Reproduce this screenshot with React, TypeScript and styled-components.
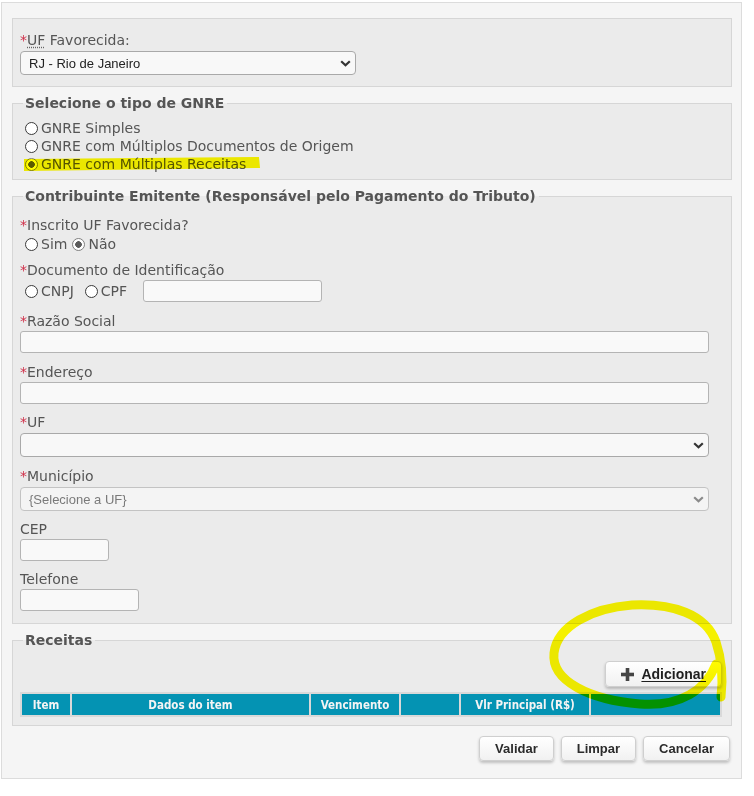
import React from 'react';
import styled, { createGlobalStyle } from 'styled-components';

const GlobalStyle = createGlobalStyle`
  html, body { margin: 0; padding: 0; background: #fff; }
  body { font-family: "DejaVu Sans", Verdana, sans-serif; }
`;

const Root = styled.div`
  position: relative;
  padding: 2px 0 0 1px;
`;

const Page = styled.div`
  box-sizing: border-box;
  width: 741px;
  padding: 15px 9px 17px 10px;
  background: #f5f5f5;
  border: 1px solid #dcdcdc;
`;

const Fieldset = styled.fieldset<{ $pad: string; $mb?: number }>`
  margin: 0 0 ${p => p.$mb ?? 7}px;
  padding: ${p => p.$pad};
  border: 1px solid #d6d6d6;
  background: #ebebeb;
  min-width: 0;
`;

const Legend = styled.legend`
  margin-left: 3px;
  padding: 0 3px 0 2px;
  font-weight: bold;
  font-size: 14px;
  line-height: 18px;
  color: #555;
`;

const Label = styled.div<{ $mt?: number }>`
  margin-top: ${p => p.$mt ?? 0}px;
  font-size: 14px;
  line-height: 18px;
  color: #555;
`;

const Req = styled.span`
  color: #d0304a;
`;

const Abbr = styled.abbr`
  text-decoration: underline dotted #666;
  text-underline-offset: 2px;
`;

const RadioRow = styled.div<{ $h?: number; $mt?: number }>`
  display: flex;
  align-items: center;
  height: ${p => p.$h ?? 18}px;
  margin-top: ${p => p.$mt ?? 0}px;
  font-size: 14px;
  color: #555;
`;

const RadioLabel = styled.label<{ $mr?: number }>`
  display: inline-flex;
  align-items: center;
  margin-right: ${p => p.$mr ?? 0}px;
  white-space: nowrap;
`;

const Radio = styled.input.attrs({ type: 'radio' })`
  appearance: none;
  -webkit-appearance: none;
  box-sizing: border-box;
  width: 13px;
  height: 13px;
  margin: 0 3px 0 5px;
  border-radius: 50%;
  border: 1px solid #3a3a3a;
  background: #fff;
  &:checked {
    border-color: #808080;
    background: radial-gradient(circle, #5c5c5c 0 3px, #fff 3.6px);
  }
`;

const TextInput = styled.input<{ $w?: number; $ml?: number; $mt?: number }>`
  box-sizing: border-box;
  display: block;
  width: ${p => (p.$w ? `${p.$w}px` : '100%')};
  height: 22px;
  margin: ${p => p.$mt ?? 0}px 0 0 ${p => p.$ml ?? 0}px;
  border: 1px solid #b4b4b4;
  border-radius: 3px;
  background: #f9f9f9;
  font: 13px "Liberation Sans", Arial, sans-serif;
`;

const SelectWrap = styled.div<{ $w?: number }>`
  position: relative;
  width: ${p => (p.$w ? `${p.$w}px` : '100%')};
  margin-top: 2px;
`;

const SelectBox = styled.select`
  appearance: none;
  -webkit-appearance: none;
  box-sizing: border-box;
  display: block;
  width: 100%;
  height: 24px;
  border: 1px solid #a9a9a9;
  border-radius: 4px;
  background: #f8f8f8;
  padding: 0 24px 0 8px;
  font: 13px "Liberation Sans", Arial, sans-serif;
  color: #222;
  &:disabled {
    color: #7a7a7a;
    border-color: #c3c3c3;
    background: #f4f4f4;
    opacity: 1;
  }
`;

const Chevron = styled.svg`
  position: absolute;
  right: 5px;
  top: 50%;
  margin-top: -3px;
  pointer-events: none;
`;

const ActionRow = styled.div<{ $mt?: number; $pr?: number; $gap?: number }>`
  display: flex;
  justify-content: flex-end;
  gap: ${p => p.$gap ?? 0}px;
  margin-top: ${p => p.$mt ?? 0}px;
  padding-right: ${p => p.$pr ?? 0}px;
`;

const Button = styled.button<{ $h: number; $fs: number }>`
  box-sizing: border-box;
  display: inline-flex;
  align-items: center;
  justify-content: center;
  gap: 7px;
  height: ${p => p.$h}px;
  padding: 0 15px;
  border: 1px solid #cfcfcf;
  border-radius: 4px;
  background: linear-gradient(#ffffff, #f1f1f1);
  box-shadow: 0 2px 3px rgba(0, 0, 0, 0.22);
  font: bold ${p => p.$fs}px "Liberation Sans", Arial, sans-serif;
  color: #2b2b2b;
`;

const Underlined = styled.span`
  text-decoration: underline;
  text-underline-offset: 2px;
  color: #1f1f1f;
`;

const Table = styled.table`
  width: 702px;
  margin-top: 5px;
  table-layout: fixed;
  border-collapse: separate;
  border-spacing: 2px;
  background: #d9d9d9;
`;

const Th = styled.th<{ $w: number }>`
  width: ${p => p.$w}px;
  height: 21px;
  padding: 0;
  background: #0493b3;
  color: #f4f4f4;
  font: bold 11.5px "DejaVu Sans Condensed", "DejaVu Sans", sans-serif;
  font-stretch: condensed;
  text-align: center;
`;

const Overlay = styled.svg`
  position: absolute;
  left: 0;
  top: 0;
  pointer-events: none;
  mix-blend-mode: multiply;
`;

const Chev: React.FC<{ muted?: boolean }> = ({ muted }) => (
  <Chevron width="11" height="7" viewBox="0 0 11 7">
    <polyline
      points="1.2,1.2 5.5,5.3 9.8,1.2"
      fill="none"
      stroke={muted ? '#8a8a8a' : '#333'}
      strokeWidth="2.2"
    />
  </Chevron>
);

const Plus = () => (
  <svg width="13" height="13" viewBox="0 0 13 13">
    <rect x="4.7" y="0" width="3.6" height="13" fill="#454545" />
    <rect x="0" y="4.7" width="13" height="3.6" fill="#454545" />
  </svg>
);

const columns = [
  { label: 'Item', w: 48 },
  { label: 'Dados do item', w: 237 },
  { label: 'Vencimento', w: 88 },
  { label: '', w: 58 },
  { label: 'Vlr Principal (R$)', w: 128 },
  { label: '', w: 129 },
];

export default function App() {
  return (
    <Root>
      <GlobalStyle />
      <Page>
        <Fieldset $pad="12px 22px 11px 7px">
          <Label>
            <Req>*</Req>
            <Abbr title="Unidade Federativa">UF</Abbr> Favorecida:
          </Label>
          <SelectWrap $w={336}>
            <SelectBox defaultValue="RJ">
              <option value="RJ">RJ - Rio de Janeiro</option>
            </SelectBox>
            <Chev />
          </SelectWrap>
        </Fieldset>

        <Fieldset $pad="7px 22px 6px 7px">
          <Legend>Selecione o tipo de GNRE</Legend>
          <RadioRow>
            <RadioLabel>
              <Radio name="tipo" />GNRE Simples
            </RadioLabel>
          </RadioRow>
          <RadioRow>
            <RadioLabel>
              <Radio name="tipo" />GNRE com Múltiplos Documentos de Origem
            </RadioLabel>
          </RadioRow>
          <RadioRow>
            <RadioLabel>
              <Radio name="tipo" defaultChecked />GNRE com Múltiplas Receitas
            </RadioLabel>
          </RadioRow>
        </Fieldset>

        <Fieldset $pad="11px 22px 12px 7px">
          <Legend>Contribuinte Emitente (Responsável pelo Pagamento do Tributo)</Legend>
          <Label>
            <Req>*</Req>Inscrito UF Favorecida?
          </Label>
          <RadioRow $mt={1}>
            <RadioLabel>
              <Radio name="inscrito" />Sim
            </RadioLabel>
            <RadioLabel>
              <Radio name="inscrito" defaultChecked />Não
            </RadioLabel>
          </RadioRow>
          <Label $mt={8}>
            <Req>*</Req>Documento de Identificação
          </Label>
          <RadioRow $h={22} $mt={1}>
            <RadioLabel $mr={6}>
              <Radio name="doc" />CNPJ
            </RadioLabel>
            <RadioLabel>
              <Radio name="doc" />CPF
            </RadioLabel>
            <TextInput $w={179} $ml={16} />
          </RadioRow>
          <Label $mt={10}>
            <Req>*</Req>Razão Social
          </Label>
          <TextInput $mt={1} />
          <Label $mt={10}>
            <Req>*</Req>Endereço
          </Label>
          <TextInput $mt={1} />
          <Label $mt={9}>
            <Req>*</Req>UF
          </Label>
          <SelectWrap>
            <SelectBox defaultValue="">
              <option value=""></option>
            </SelectBox>
            <Chev />
          </SelectWrap>
          <Label $mt={10}>
            <Req>*</Req>Município
          </Label>
          <SelectWrap>
            <SelectBox disabled defaultValue="">
              <option value="">{'{Selecione a UF}'}</option>
            </SelectBox>
            <Chev muted />
          </SelectWrap>
          <Label $mt={9}>CEP</Label>
          <TextInput $w={89} $mt={1} />
          <Label $mt={9}>Telefone</Label>
          <TextInput $w={119} $mt={1} />
        </Fieldset>

        <Fieldset $pad="12px 9px 8px 7px" $mb={0}>
          <Legend>Receitas</Legend>
          <ActionRow>
            <Button $h={26} $fs={14}>
              <Plus />
              <Underlined>Adicionar</Underlined>
            </Button>
          </ActionRow>
          <Table>
            <thead>
              <tr>
                {columns.map((c, i) => (
                  <Th key={i} $w={c.w}>
                    {c.label}
                  </Th>
                ))}
              </tr>
            </thead>
          </Table>
        </Fieldset>

        <ActionRow $mt={10} $pr={2} $gap={7}>
          <Button $h={25} $fs={13}>Validar</Button>
          <Button $h={25} $fs={13}>Limpar</Button>
          <Button $h={25} $fs={13}>Cancelar</Button>
        </ActionRow>
      </Page>

      <Overlay width="754" height="796" viewBox="0 0 754 796">
        <polygon points="24,159 259,157 260,168 24,171" fill="#fffb00" />
        <path
          d="M721 697 C723 680 722 660 716 642 C706 614 672 603 632 605 C592 608 557 626 554 653 C551 681 590 700 640 704 C680 707 706 690 716 664"
          fill="none"
          stroke="#fffb00"
          strokeWidth="9"
          strokeLinecap="round"
        />
      </Overlay>
    </Root>
  );
}
